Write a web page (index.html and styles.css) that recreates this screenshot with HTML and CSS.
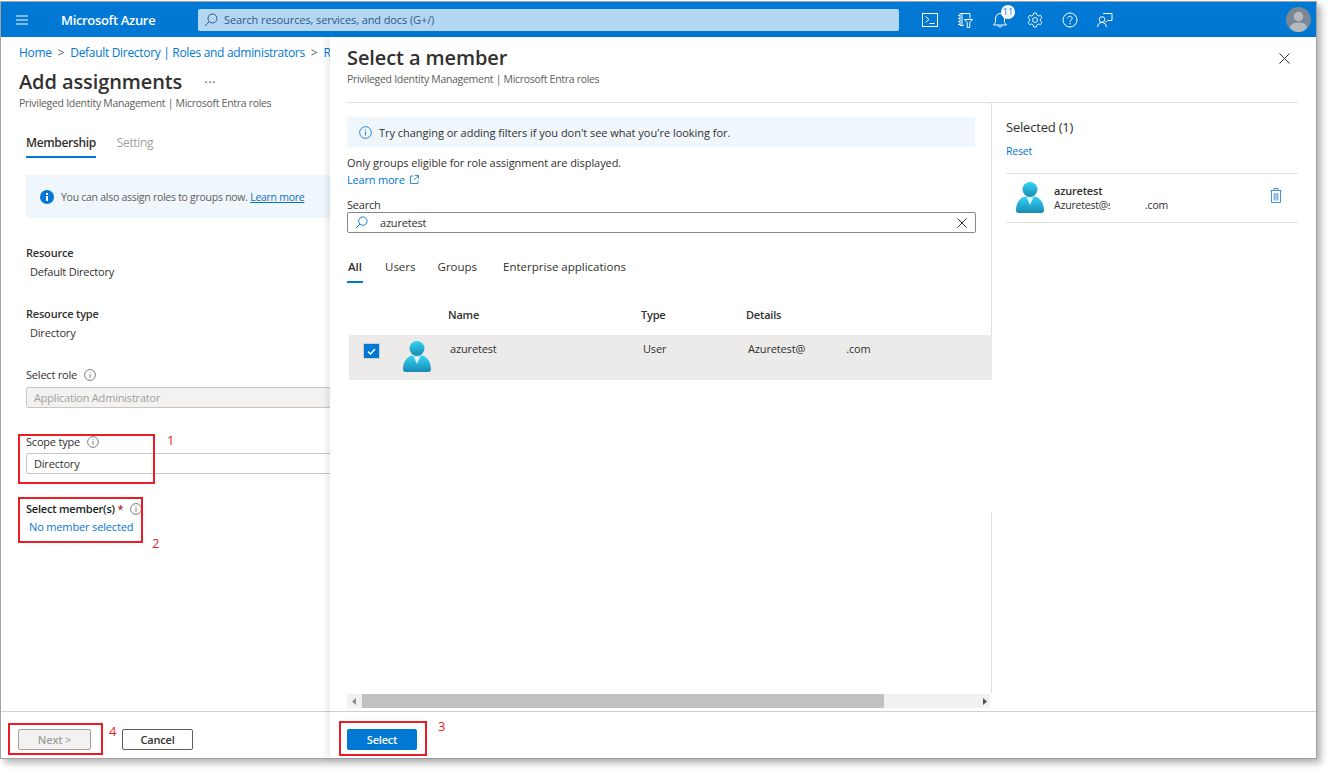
FILE: index.html
```html
<!DOCTYPE html>
<html lang="en">
<head>
    <meta charset="UTF-8">
    <title>Add assignments - Microsoft Azure</title>
    <link rel="stylesheet" href="styles.css">
</head>
<body>
    <svg class="defs" width="0" height="0">
        <defs>
            <linearGradient id="personBody" x1="0" y1="0" x2="0" y2="1">
                <stop offset="0" stop-color="#32d4f5"/>
                <stop offset="1" stop-color="#198ab3"/>
            </linearGradient>
            <symbol id="person" viewBox="0 0 28 31">
                <circle cx="14" cy="7.500" r="7.500" fill="url(#personBody)"/>
                <path d="M0 28.500C0 21 4 15.500 9 14.500L14 16L19 14.500C24 15.500 28 21 28 28.500C28 30 27 31 25.500 31H2.500C1 31 0 30 0 28.500Z" fill="url(#personBody)"/>
                <path d="M10.500 15.500H17.500L14 23Z" fill="#d8f3fb"/>
            </symbol>
            <symbol id="info" viewBox="0 0 12 12">
                <circle cx="6" cy="6" r="5.400" fill="none" stroke="currentColor" stroke-width="0.800"/>
                <rect x="5.600" y="5" width="0.800" height="3.800" fill="currentColor"/>
                <rect x="5.600" y="3.200" width="0.800" height="0.900" fill="currentColor"/>
            </symbol>
            <symbol id="lens" viewBox="0 0 14 14">
                <circle cx="8.500" cy="5.500" r="4.500" fill="none" stroke="currentColor"/>
                <path d="M5.300 8.700L1 13" fill="none" stroke="currentColor"/>
            </symbol>
        </defs>
    </svg>

    <div class="window">
        <header class="topbar">
            <svg class="hamburger" width="12" height="10" viewBox="0 0 12 10">
                <path d="M0 1H12M0 5H12M0 9H12" stroke="#fff" fill="none"/>
            </svg>
            <div class="brand">Microsoft Azure</div>
            <div class="global-search">
                <svg class="lens" width="14" height="14"><use href="#lens"/></svg>
                <span>Search resources, services, and docs (G+/)</span>
            </div>
            <div class="top-icons">
                <div class="top-icon">
                    <svg width="16" height="14" viewBox="0 0 16 14">
                        <rect x="0.500" y="0.500" width="15" height="13" fill="none" stroke="#fff"/>
                        <path d="M3.500 3.500L7 6.500L3.500 9.500M7.500 10.500H12.500" fill="none" stroke="#fff"/>
                    </svg>
                </div>
                <div class="top-icon">
                    <svg width="16" height="16" viewBox="0 0 16 16">
                        <path d="M3 1.500H13V6.500M3 1.500V13.500H7M1 3.500H3M1 6.500H3M1 9.500H3M1 12.500H3M5 1.500V13.500" fill="none" stroke="#fff"/>
                        <path d="M7.500 7.500H15.500L12.800 10.500V15.500H10.200V10.500Z" fill="#0078d4" stroke="#fff"/>
                    </svg>
                </div>
                <div class="top-icon">
                    <svg width="16" height="16" viewBox="0 0 16 16">
                        <path d="M8 1.500C5 1.500 3.500 4 3.500 7V10.500L1.500 13H14.500L12.500 10.500V7C12.500 4 11 1.500 8 1.500ZM6 13.500C6 15.500 10 15.500 10 13.500" fill="none" stroke="#fff"/>
                    </svg>
                    <span class="badge">11</span>
                </div>
                <div class="top-icon">
                    <svg width="16" height="16" viewBox="0 0 16 16">
                        <path d="M6.600 1H9.400L9.800 3L11.500 4L13.500 3.300L14.900 5.700L13.300 7V9L14.900 10.300L13.500 12.700L11.500 12L9.800 13L9.400 15H6.600L6.200 13L4.500 12L2.500 12.700L1.100 10.300L2.700 9V7L1.100 5.700L2.500 3.300L4.500 4L6.200 3Z" fill="none" stroke="#fff" stroke-width="0.900"/>
                        <circle cx="8" cy="8" r="2.500" fill="none" stroke="#fff" stroke-width="0.900"/>
                    </svg>
                </div>
                <div class="top-icon">
                    <svg width="16" height="16" viewBox="0 0 16 16">
                        <circle cx="8" cy="8" r="7" fill="none" stroke="#fff"/>
                        <path d="M5.800 6.200C5.800 3.600 10.200 3.600 10.200 6.200C10.200 8 8 8 8 10" fill="none" stroke="#fff"/>
                        <rect x="7.400" y="11" width="1.200" height="1.300" fill="#fff"/>
                    </svg>
                </div>
                <div class="top-icon">
                    <svg width="16" height="16" viewBox="0 0 16 16">
                        <path d="M6 1.500H15V8.500H10.500L8.500 10.500" fill="none" stroke="#fff"/>
                        <circle cx="5" cy="7.500" r="2.800" fill="#0078d4" stroke="#fff"/>
                        <path d="M0.700 15C0.700 12 2.500 10.500 5 10.500C7.500 10.500 9.300 12 9.300 15" fill="none" stroke="#fff"/>
                    </svg>
                </div>
            </div>
            <svg class="avatar" width="25" height="25" viewBox="0 0 25 25">
                <circle cx="12.500" cy="12.500" r="12.500" fill="#7a8794"/>
                <circle cx="12.500" cy="9.500" r="4.800" fill="#b4b9be"/>
                <path d="M4 21C4 17 8 15.500 12.500 15.500C17 15.500 21 17 21 21C19 23.500 16 25 12.500 25C9 25 6 23.500 4 21Z" fill="#b4b9be"/>
            </svg>
        </header>

        <div class="content">
            <section class="blade">
                <div class="blade-body">
                    <nav class="breadcrumb">
                        <a>Home</a><span class="crumb-sep">&gt;</span><a>Default Directory | Roles and administrators</a><span class="crumb-sep">&gt;</span><a>Roles</a>
                    </nav>
                    <div class="title-row">
                        <h1 class="blade-title">Add assignments</h1>
                        <span class="more">···</span>
                    </div>
                    <div class="subtitle">Privileged Identity Management | Microsoft Entra roles</div>

                    <div class="inset">
                        <div class="steps">
                            <div class="step active">Membership</div>
                            <div class="step muted">Setting</div>
                        </div>

                        <div class="info-bar">
                            <svg width="14" height="14" viewBox="0 0 14 14">
                                <circle cx="7" cy="7" r="7" fill="#0078d4"/>
                                <rect x="6" y="6" width="2" height="5" fill="#fff"/>
                                <rect x="6" y="3" width="2" height="2" fill="#fff"/>
                            </svg>
                            <span>You can also assign roles to groups now. <a class="underlined">Learn more</a></span>
                        </div>

                        <div class="field">
                            <div class="label">Resource</div>
                            <div class="value">Default Directory</div>
                        </div>
                        <div class="field">
                            <div class="label">Resource type</div>
                            <div class="value">Directory</div>
                        </div>
                        <div class="field">
                            <div class="label light">Select role <svg class="tip" width="12" height="12"><use href="#info"/></svg></div>
                            <div class="input disabled">Application Administrator</div>
                        </div>
                        <div class="field scope">
                            <div class="label light">Scope type <svg class="tip" width="12" height="12"><use href="#info"/></svg></div>
                            <div class="input scope-input">Directory</div>
                        </div>
                        <div class="field">
                            <div class="label strong">Select member(s) <span class="req">*</span> <svg class="tip" width="12" height="12"><use href="#info"/></svg></div>
                            <a class="value member-link">No member selected</a>
                        </div>
                    </div>
                </div>
                <footer class="footer">
                    <button class="btn btn-disabled">Next &gt;</button>
                    <button class="btn btn-outline">Cancel</button>
                </footer>
            </section>

            <section class="panel">
                <div class="panel-head">
                    <div>
                        <h2 class="panel-title">Select a member</h2>
                        <div class="subtitle">Privileged Identity Management | Microsoft Entra roles</div>
                    </div>
                    <svg class="close" width="11" height="11" viewBox="0 0 11 11">
                        <path d="M0.500 0.500L10.500 10.500M10.500 0.500L0.500 10.500" stroke="#323130" fill="none"/>
                    </svg>
                </div>

                <div class="panel-body">
                    <div class="picker">
                        <div class="notice">
                            <svg width="13" height="13" class="notice-icon"><use href="#info"/></svg>
                            <span>Try changing or adding filters if you don't see what you're looking for.</span>
                        </div>
                        <div class="plain-line">Only groups eligible for role assignment are displayed.</div>
                        <a class="learn-more">Learn more
                            <svg width="9" height="9" viewBox="0 0 9 9">
                                <path d="M3.500 1H0.500V8.500H8V5.500M5 0.500H8.500V4M8.500 0.500L4 5" fill="none" stroke="#0078d4" stroke-width="0.800"/>
                            </svg>
                        </a>
                        <div class="search-label">Search</div>
                        <div class="search-box">
                            <svg class="lens-small" width="13" height="13"><use href="#lens"/></svg>
                            <span>azuretest</span>
                            <svg class="clear" width="10" height="10" viewBox="0 0 10 10">
                                <path d="M0.500 0.500L9.500 9.500M9.500 0.500L0.500 9.500" stroke="#323130" fill="none"/>
                            </svg>
                        </div>
                        <div class="tabs">
                            <div class="tab tab-active">All</div>
                            <div class="tab tab-users">Users</div>
                            <div class="tab tab-groups">Groups</div>
                            <div class="tab">Enterprise applications</div>
                        </div>
                        <div class="grid-row table-head">
                            <div></div><div></div>
                            <div>Name</div><div>Type</div><div>Details</div>
                        </div>
                        <div class="grid-row table-row">
                            <div class="checkbox">
                                <svg width="9" height="7" viewBox="0 0 9 7">
                                    <path d="M1 3.500L3.500 6L8 1" fill="none" stroke="#fff" stroke-width="1.500"/>
                                </svg>
                            </div>
                            <svg class="person" width="28" height="31"><use href="#person"/></svg>
                            <div class="cell">azuretest</div>
                            <div class="cell">User</div>
                            <div class="cell">Azuretest@<span class="masked">.com</span></div>
                        </div>
                        <div class="scrollbar">
                            <svg width="4" height="7" viewBox="0 0 4 7" class="arrow-left"><path d="M4 0V7L0 3.500Z" fill="#8a8a8a"/></svg>
                            <div class="thumb"></div>
                            <svg width="4" height="7" viewBox="0 0 4 7" class="arrow-right"><path d="M0 0V7L4 3.500Z" fill="#505050"/></svg>
                        </div>
                    </div>

                    <aside class="selected">
                        <div class="selected-title">Selected (1)</div>
                        <a class="reset">Reset</a>
                        <div class="selected-item">
                            <svg class="person" width="28" height="31"><use href="#person"/></svg>
                            <div class="selected-text">
                                <div class="selected-name">azuretest</div>
                                <div class="selected-mail"><span class="mail-clip">Azuretest@sample</span><span>.com</span></div>
                            </div>
                            <svg class="trash" width="12" height="15" viewBox="0 0 12 15">
                                <path d="M0.500 2.500H11.500M4 2.500V0.500H8V2.500M1.500 2.500V14.500H10.500V2.500M4.200 5V12.500M6 5V12.500M7.800 5V12.500" fill="none" stroke="#4a8fd0"/>
                            </svg>
                        </div>
                    </aside>
                </div>

                <footer class="footer">
                    <button class="btn btn-primary">Select</button>
                </footer>
            </section>
        </div>

        <div class="mark mark-1"></div>
        <div class="mark mark-2"></div>
        <div class="mark mark-3"></div>
        <div class="mark mark-4"></div>
        <span class="mark-num num-1">1</span>
        <span class="mark-num num-2">2</span>
        <span class="mark-num num-3">3</span>
        <span class="mark-num num-4">4</span>
    </div>
</body>
</html>
```

FILE: styles.css
```css
* {
    box-sizing: border-box;
}
html, body {
    margin: 0;
    padding: 0;
    background: #fff;
}
body {
    width: 1332px;
    height: 775px;
    overflow: hidden;
    font-family: "Open Sans", "Noto Sans", sans-serif;
    font-size: 11px;
    letter-spacing: -0.2px;
    color: #323130;
}
a {
    color: #0078d4;
}
.defs {
    position: absolute;
}

/* outer frame of the captured window */
.window {
    position: relative;
    width: 1317px;
    height: 758px;
    margin-top: 1px;
    border: 1px solid #a3a3a3;
    box-shadow: 4px 4px 7px rgba(0,0,0,0.3);
    display: flex;
    flex-direction: column;
    background: #fff;
}

/* top bar */
.topbar {
    height: 35px;
    flex: none;
    background: #0078d4;
    display: flex;
    align-items: center;
    color: #fff;
}
.topbar > * {
    flex: none;
}
.hamburger {
    margin-left: 15px;
}
.brand {
    width: 137px;
    margin-left: 33px;
    font-size: 13px;
    font-weight: 600;
    letter-spacing: -0.33px;
}
.global-search {
    width: 701px;
    height: 22px;
    background: #b3d6f2;
    border-radius: 2px;
    display: flex;
    align-items: center;
    color: #2b5d86;
    padding-left: 6px;
    font-size: 11px;
    letter-spacing: -0.1px;
}
.lens {
    color: #2b5d86;
    margin-right: 6px;
}
.top-icons {
    display: flex;
    margin-left: 13px;
}
.top-icon {
    position: relative;
    width: 35px;
    height: 20px;
    display: flex;
    align-items: center;
    justify-content: center;
}
.badge {
    position: absolute;
    top: -5px;
    left: 19px;
    width: 14px;
    height: 14px;
    border-radius: 50%;
    background: #fff;
    color: #0078d4;
    font-size: 9px;
    line-height: 14px;
    text-align: center;
    letter-spacing: 0;
}
.avatar {
    margin-left: 164px;
}

/* main area */
.content {
    flex: 1;
    display: flex;
    min-height: 0;
}
.blade {
    width: 329px;
    flex: none;
    display: flex;
    flex-direction: column;
    overflow: hidden;
}
.blade-body {
    flex: 1;
    padding: 8px 0 0 18px;
    white-space: nowrap;
}
.breadcrumb {
    height: 16px;
    line-height: 16px;
    font-size: 12px;
    letter-spacing: -0.31px;
}
.crumb-sep {
    color: #605e5c;
    margin: 0 6px;
}
.title-row {
    display: flex;
    align-items: center;
    margin-top: 7px;
    height: 28px;
}
.blade-title, .panel-title {
    margin: 0;
    font-size: 20px;
    font-weight: 600;
    line-height: 28px;
    letter-spacing: -0.1px;
}
.more {
    margin-left: 22px;
    font-size: 13px;
    color: #605e5c;
    letter-spacing: 0.5px;
}
.subtitle {
    font-size: 10.5px;
    line-height: 14px;
    color: #605e5c;
    letter-spacing: -0.3px;
}
.inset {
    padding-left: 7px;
}
.steps {
    display: flex;
    margin-top: 25px;
}
.step {
    font-size: 12px;
    line-height: 16px;
    letter-spacing: -0.35px;
    padding-bottom: 5px;
    border-bottom: 2px solid transparent;
    margin-right: 21px;
}
.step.active {
    font-weight: 600;
    border-bottom-color: #0078d4;
}
.step.muted {
    color: #a19f9d;
}
.info-bar {
    margin-top: 17px;
    width: 400px;
    height: 43px;
    background: #eff6fc;
    display: flex;
    align-items: center;
    padding-left: 14px;
    gap: 7px;
    font-size: 10.5px;
    letter-spacing: -0.27px;
    color: #605e5c;
}
.underlined {
    text-decoration: underline;
    color: #106ebe;
}
.field {
    margin-top: 28px;
}
.label, .value {
    line-height: 14px;
}
.label {
    font-weight: 600;
}
.label.light {
    font-weight: 400;
}
.label.strong {
    color: #201f1e;
}
.value {
    display: block;
    margin-top: 5px;
    padding-left: 4px;
}
.tip {
    color: #605e5c;
    vertical-align: -2px;
    margin-left: 4px;
}
.req {
    color: #a4262c;
}
.input {
    width: 400px;
    height: 21px;
    margin-top: 5px;
    border: 1px solid #c8c6c4;
    border-radius: 2px;
    padding-left: 7px;
    line-height: 19px;
}
.input.disabled {
    background: #f3f2f1;
    color: #a19f9d;
}
.scope {
    margin-top: 27px;
}
.scope-input {
    margin-top: 4px;
}
.member-link {
    margin-top: 4px;
    padding-left: 3px;
    letter-spacing: -0.15px;
}
.footer {
    height: 47px;
    flex: none;
    border-top: 1px solid #d2d0ce;
    padding: 17px 0 0 17px;
    display: flex;
    align-items: flex-start;
    gap: 31px;
}
.btn {
    height: 21px;
    font-family: inherit;
    font-size: 11px;
    letter-spacing: -0.2px;
    border-radius: 2px;
    padding: 0 0 1px;
}
.btn-disabled {
    width: 73px;
    background: #f3f2f1;
    border: 1px solid #a19f9d;
    color: #a19f9d;
    font-weight: 600;
}
.btn-outline {
    width: 71px;
    background: #fff;
    border: 1px solid #605e5c;
    color: #323130;
    font-weight: 600;
}
.btn-primary {
    width: 70px;
    padding: 0;
    background: #0078d4;
    border: none;
    color: #fff;
    font-weight: 600;
}

/* member picker */
.panel {
    flex: 1;
    min-width: 0;
    display: flex;
    flex-direction: column;
    background: #fff;
    box-shadow: -3px 0 7px rgba(0,0,0,0.09);
    z-index: 1;
}
.panel-head {
    margin: 0 18px 0 17px;
    padding: 7px 0 16px;
    border-bottom: 1px solid #e1dfdd;
    display: flex;
    justify-content: space-between;
    flex: none;
}
.close {
    margin: 9px 8px 0 0;
}
.panel-body {
    flex: 1;
    min-height: 0;
    display: flex;
}
.picker {
    width: 662px;
    flex: none;
    padding-left: 17px;
    display: flex;
    flex-direction: column;
    /* the divider has a gap below the table */
    background: linear-gradient(#e1dfdd 0 277px, transparent 277px 409px, #e1dfdd 409px 590px, transparent 590px) right top / 1px 100% no-repeat;
}
.notice {
    margin-top: 14px;
    width: 628px;
    height: 30px;
    flex: none;
    background: #eff6fc;
    display: flex;
    align-items: center;
    padding-left: 12px;
    gap: 7px;
    letter-spacing: -0.03px;
}
.notice-icon {
    color: #0078d4;
}
.plain-line, .learn-more, .search-label {
    line-height: 14px;
}
.plain-line {
    margin-top: 9px;
    letter-spacing: -0.07px;
}
.learn-more {
    margin-top: 3px;
}
.learn-more svg {
    margin-left: 3px;
}
.search-label {
    margin-top: 11px;
}
.search-box {
    width: 629px;
    height: 21px;
    flex: none;
    border: 1px solid #8a8886;
    border-radius: 2px;
    display: flex;
    align-items: center;
}
.lens-small {
    color: #0078d4;
    margin: 0 12px 0 7px;
}
.clear {
    margin-left: auto;
    margin-right: 8px;
}
.tabs {
    display: flex;
    margin-top: 26px;
}
.tab {
    line-height: 16px;
    padding-bottom: 6px;
    border-bottom: 2px solid transparent;
    font-size: 11.5px;
    letter-spacing: 0;
}
.tab-active {
    width: 16px;
    margin-right: 22px;
    font-weight: 600;
    border-bottom-color: #0078d4;
    padding-left: 1px;
}
.tab-users {
    margin-right: 22px;
}
.tab-groups {
    margin-right: 26px;
}
.grid-row {
    display: grid;
    grid-template-columns: 54px 47px 193px 105px 1fr;
}
.table-head {
    margin-top: 24px;
    line-height: 16px;
    font-weight: 600;
}
.table-row {
    margin: 12px 0 0 2px;
    height: 45px;
    background: #edebe9;
    letter-spacing: -0.15px;
}
.checkbox {
    width: 17px;
    height: 16px;
    margin: 8px 0 0 14px;
    background: #0078d4;
    border: 1px solid #fff;
    outline: 1px solid #d2d0ce;
    outline-offset: -1px;
    display: flex;
    align-items: center;
    justify-content: center;
}
.table-row .person {
    margin-top: 6px;
}
.cell {
    margin-top: 7px;
    line-height: 14px;
}
.masked {
    margin-left: 41px;
}
.scrollbar {
    margin: auto 0 3px;
    height: 14px;
    flex: none;
    background: #f1f1f1;
    width: 643px;
    display: flex;
    align-items: center;
}
.arrow-left {
    margin-left: 5px;
}
.thumb {
    width: 522px;
    height: 14px;
    margin-left: 6px;
    background: #c1c1c1;
}
.arrow-right {
    margin-left: auto;
    margin-right: 3px;
}

/* selected list */
.selected {
    flex: 1;
    padding: 15px 18px 0 14px;
}
.selected-title {
    font-size: 13px;
    line-height: 18px;
    font-weight: 500;
}
.reset {
    display: block;
    margin-top: 8px;
    line-height: 14px;
    font-size: 10.5px;
}
.selected-item {
    margin-top: 15px;
    height: 50px;
    border-top: 1px solid #e1dfdd;
    border-bottom: 1px solid #e1dfdd;
    display: flex;
    padding: 8px 16px 0 10px;
}
.selected-text {
    margin: 2px 0 0 10px;
}
.selected-name {
    line-height: 14px;
    font-weight: 600;
}
.selected-mail {
    line-height: 14px;
    font-size: 10.5px;
    display: flex;
}
.mail-clip {
    display: block;
    width: 56px;
    overflow: hidden;
    white-space: nowrap;
    margin-right: 35px;
}
.trash {
    margin: 6px 0 0 auto;
}

/* red review marks drawn over the capture */
.mark {
    position: absolute;
    border: 2px solid #ed1c24;
    z-index: 2;
}
.mark-1 { left: 17px; top: 432px; width: 137px; height: 50px; }
.mark-2 { left: 17px; top: 495px; width: 125px; height: 46px; }
.mark-3 { left: 338px; top: 719px; width: 88px; height: 35px; }
.mark-4 { left: 7px; top: 721px; width: 95px; height: 32px; }
.mark-num {
    position: absolute;
    color: #ed1c24;
    font-size: 13px;
    line-height: 14px;
    z-index: 2;
}
.num-1 { left: 166px; top: 431px; }
.num-2 { left: 151px; top: 534px; }
.num-3 { left: 437px; top: 717px; }
.num-4 { left: 108px; top: 722px; }
```
